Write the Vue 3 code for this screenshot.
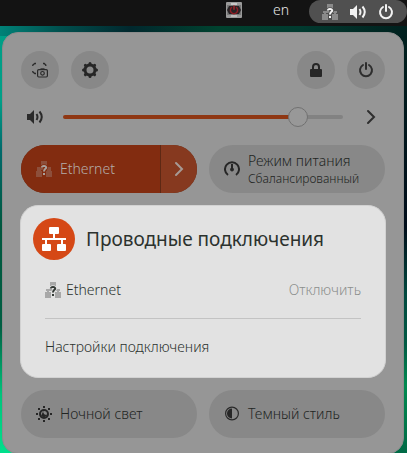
<script setup>
import { ref } from 'vue'
const volume = ref(86.5)
</script>

<template>
  <div class="desktop">
    <header class="topbar">
      <button class="tray" aria-label="Питание приложения">
        <svg width="16" height="16" viewBox="0 0 16 16">
          <rect width="16" height="16" rx="1" fill="#9a9a9a" />
          <rect x="1" y="3" width="14" height="10" fill="#777" />
          <path d="M3 4h10l2 4-2 4H3L1 8z" fill="#262224" />
          <rect x="5" y="1" width="6" height="2" fill="#c8c8c8" />
          <rect x="5" y="13" width="6" height="2" fill="#bbb" />
          <path d="M6 5.200a3.600 3.600 0 1 0 4 0" fill="none" stroke="#8e1c24" stroke-width="1.400" />
          <path d="M8 3.400v4.400" stroke="#a8242a" stroke-width="1.400" />
        </svg>
      </button>
      <button class="lang">en</button>
      <button class="status" aria-label="Системное меню">
        <svg width="16" height="16" viewBox="0 0 16 16">
          <path d="M5 0h6v5H5zM1 7h14v2H1zM0 10h6v6H0zM10 10h6v6h-6zM2 8h2v3H2zM12 8h2v3h-2z" fill="#8a8a8a" />
          <path d="M5.800 6.500a2.200 1.600 0 1 1 3.400 1.400C8.400 8.600 8 9 8 10.400M8 12v2" fill="none" stroke="#505050" stroke-width="3.500" />
          <path d="M5.800 6.500a2.200 1.600 0 1 1 3.400 1.400C8.400 8.600 8 9 8 10.400M8 12v2" fill="none" stroke="#f4f4f4" stroke-width="2" />
        </svg>
        <svg width="16" height="16" viewBox="0 0 16 16" fill="none" stroke="#f2f2f2" stroke-width="2">
          <path d="M0 5h3l4-4v14l-4-4H0z" fill="#f2f2f2" stroke="none" />
          <path d="M9.500 5q2 3 0 6M12.500 2.500q4.500 5.500 0 11" />
        </svg>
        <svg width="16" height="16" viewBox="0 0 16 16" fill="none" stroke="#f2f2f2" stroke-width="2">
          <path d="M5 3a6 6 0 1 0 6 0M8 1v6" stroke-linecap="round" />
        </svg>
      </button>
    </header>

    <main class="panel">
      <div class="row">
        <button class="round" aria-label="Снимок экрана">
          <svg width="16" height="16" viewBox="0 0 16 16" fill="none" stroke="#2a2a2a">
            <path d="M.8 4V3l2-1.500H4M11 1.500h1.200l1.600 1.500v1M.8 9v1l2 1.500H4" stroke-width="1.300" />
            <rect x="5.600" y="7.600" width="9.800" height="7.400" rx="1.200" stroke-width="1.200" />
            <path d="M8.500 7h4" stroke-width="1.400" />
            <circle cx="10.500" cy="11.300" r="1.800" stroke-width="1.200" />
          </svg>
        </button>
        <button class="round" aria-label="Настройки">
          <svg width="16" height="16" viewBox="0 0 16 16" fill="none" stroke="#262626">
            <circle cx="8" cy="8" r="5" stroke-width="3" />
            <g stroke-width="3" stroke-linecap="round"><path d="M8 1.500v1M8 13.500v1M1.500 8h1M13.500 8h1M3.400 3.400l.8.8M11.800 11.800l.8.8M3.400 12.600l.8-.8M11.800 4.200l.8-.8" /></g>
          </svg>
        </button>
        <span class="spacer"></span>
        <button class="round" aria-label="Заблокировать">
          <svg width="16" height="16" viewBox="0 0 16 16">
            <rect x="2" y="7" width="12" height="8" rx="1" fill="#262626" />
            <path d="M5 8V5a3 3 0 0 1 6 0v3" fill="none" stroke="#262626" stroke-width="2" />
          </svg>
        </button>
        <button class="round" aria-label="Выключить">
          <svg width="16" height="16" viewBox="0 0 16 16" fill="none" stroke="#2e2e2e" stroke-width="2">
            <path d="M5 3a6 6 0 1 0 6 0M8 1v6" stroke-linecap="round" />
          </svg>
        </button>
      </div>

      <div class="volume">
        <button class="plain" aria-label="Выключить звук">
          <svg width="16" height="16" viewBox="0 0 16 16" fill="none" stroke="#2a2a2a" stroke-width="2">
            <path d="M0 5h3l4-4v14l-4-4H0z" fill="#2a2a2a" stroke="none" />
            <path d="M9.500 5q2 3 0 6M12.500 2.500q4.500 5.500 0 11" />
          </svg>
        </button>
        <input v-model="volume" class="slider" type="range" min="0" max="100" step="0.5" aria-label="Громкость" :style="{ '--level': volume + '%' }" />
        <button class="plain" aria-label="Устройства вывода">
          <svg width="16" height="16" viewBox="0 0 16 16"><path d="M5 2l6 6-6 6" fill="none" stroke="#2e2e2e" stroke-width="2" stroke-linecap="round" /></svg>
        </button>
      </div>

      <div class="tiles">
        <div class="split">
          <button class="tile active">
            <svg width="16" height="16" viewBox="0 0 16 16">
              <path d="M5 0h6v5H5zM1 6h14v3H1zM0 10h6v6H0zM10 10h6v6h-6zM1 8h4v3H1zM11 8h4v3h-4z" fill="#8d4f3b" />
              <path d="M5.800 6.500a2.200 1.600 0 1 1 3.400 1.400C8.400 8.600 8 9 8 10.400M8 12v2" fill="none" stroke="#822c10" stroke-width="3.500" />
              <path d="M5.800 6.500a2.200 1.600 0 1 1 3.400 1.400C8.400 8.600 8 9 8 10.400M8 12v2" fill="none" stroke="#a9a09c" stroke-width="2" />
            </svg>
            <span>Ethernet</span>
          </button>
          <button class="more" aria-label="Список подключений">
            <svg width="16" height="16" viewBox="0 0 16 16"><path d="M5 2l6 6-6 6" fill="none" stroke="#a69a95" stroke-width="2" stroke-linecap="round" /></svg>
          </button>
        </div>
        <button class="tile">
          <svg width="16" height="16" viewBox="0 0 16 16" fill="none" stroke="#262626" stroke-width="2">
            <path d="M4 14a7 7 0 1 1 8 0" />
            <path d="M8 3v5" />
            <circle cx="8" cy="8.500" r="1.500" fill="#262626" stroke-width="1" />
          </svg>
          <span class="stack"><span>Режим питания</span><small>Сбалансированный</small></span>
        </button>
      </div>

      <section class="card">
        <div class="head">
          <span class="badge">
            <svg width="24" height="24" viewBox="0 0 24 24" fill="#fff">
              <rect x="7" y="0" width="10" height="7" rx="1" />
              <path d="M11 6h2v5h11v2h-3v5h-2v-5H5v5H3v-5H0v-2h11z" />
              <rect x="0" y="17" width="9" height="7" rx="1" />
              <rect x="15" y="17" width="9" height="7" rx="1" />
            </svg>
          </span>
          <h2>Проводные подключения</h2>
        </div>
        <div class="item">
          <svg width="16" height="16" viewBox="0 0 16 16">
            <path d="M5 0h6v4H5zM1 7h14v2H1zM0 10h6v6H0zM10 10h6v6h-6zM2 8h2v3H2zM12 8h2v3h-2z" fill="#a8a8a8" />
            <path d="M5.800 6.500a2.200 1.600 0 1 1 3.400 1.400C8.400 8.600 8 9 8 10.400M8 12v2" fill="none" stroke="#e2e2e2" stroke-width="3.500" />
            <path d="M5.800 6.500a2.200 1.600 0 1 1 3.400 1.400C8.400 8.600 8 9 8 10.400M8 12v2" fill="none" stroke="#343a36" stroke-width="2" />
          </svg>
          <span>Ethernet</span>
          <span class="spacer"></span>
          <button class="off">Отключить</button>
        </div>
        <hr />
        <a class="link" href="#settings">Настройки подключения</a>
      </section>

      <div class="tiles">
        <button class="tile">
          <svg width="16" height="16" viewBox="0 0 16 16" fill="none" stroke="#262626">
            <circle cx="8" cy="8" r="4" stroke-width="2" />
            <path d="M7.500 4.500a3 3 0 0 0 4 4A4 4 0 0 1 5 10z" fill="#262626" stroke="none" />
            <path d="M8 0v2M8 14v2M0 8h2M14 8h2M2 2.900h2M12 2.900h2M2 13.100h2M12 13.100h2" stroke-width="2" />
          </svg>
          <span>Ночной свет</span>
        </button>
        <button class="tile">
          <svg width="16" height="16" viewBox="0 0 16 16">
            <circle cx="8" cy="7.500" r="6.400" fill="none" stroke="#2a2a2a" stroke-width="1.200" />
            <path d="M8 2.500a5 5 0 0 0 0 10z" fill="#262626" />
          </svg>
          <span>Темный стиль</span>
        </button>
      </div>
    </main>
  </div>
</template>

<style>
body { margin: 0; }
</style>

<style scoped>
* { box-sizing: border-box; }
.desktop {
  height: 100vh;
  overflow: hidden;
  background:
    linear-gradient(90deg, #008278 0, #00504e 60px, #01282e 130px, #00432f 220px, #013a2f 300px, #00201e 100%) top / 100% 36px no-repeat,
    linear-gradient(#009e86 5%, #00a088 22%, #006a6c 33%, #00583f 50%, #005e42 72%, #00c47c 87%, #00e08c) left / 50% 100% no-repeat,
    linear-gradient(#00201e 10%, #000d1a 50%, #00493f 65%, #005a44 76%, #008a50 85%, #006a46);
  font-family: "Noto Sans", "Open Sans", sans-serif;
  font-size: 14px;
  font-weight: 300;
  line-height: 20px;
  color: #222523;
}
button {
  margin: 0;
  padding: 0;
  border: 0;
  background: none;
  color: inherit;
  font: inherit;
}
svg { display: block; flex: none; }
.topbar {
  display: flex;
  align-items: stretch;
  justify-content: flex-end;
  height: 26px;
  background: #131313;
  color: #e8e8e8;
}
.tray { padding: 0 16px; display: flex; align-items: center; height: 20px; }
.lang { padding: 0 20px 0 15px; height: 20px; }
.status {
  display: flex;
  align-items: center;
  gap: 12px;
  height: 23px;
  padding: 0 13px;
  border-radius: 12px;
  background: #505050;
}
.panel {
  display: flex;
  flex-direction: column;
  gap: 12px;
  margin: 6px 3px 0 2px;
  padding: 18px 18px 15px;
  border: 1px solid #8c8c8c;
  border-radius: 16px;
  background: #969696;
}
.row { display: flex; gap: 12px; }
.spacer { flex: 1; }
.round {
  display: grid;
  place-items: center;
  width: 38px;
  height: 38px;
  border-radius: 50%;
  background: #888;
}
.volume {
  display: flex;
  align-items: center;
  gap: 20px;
  height: 32px;
  padding: 0 6px;
}
.slider {
  flex: 1;
  min-width: 0;
  height: 20px;
  margin: 0;
  appearance: none;
  background: none;
}
.slider::-webkit-slider-runnable-track {
  height: 4px;
  border-radius: 2px;
  background: linear-gradient(90deg, #8f3713 var(--level), #828282 var(--level));
}
.slider::-webkit-slider-thumb {
  appearance: none;
  width: 20px;
  height: 20px;
  margin-top: -8px;
  border: 1px solid #717171;
  border-radius: 50%;
  background: #989898;
}
.tiles { display: grid; grid-template-columns: 1fr 1fr; gap: 12px; }
.tile {
  display: flex;
  align-items: center;
  gap: 8px;
  height: 48px;
  padding: 0 15px;
  border-radius: 24px;
  background: #888;
  text-align: left;
  white-space: nowrap;
}
.split { display: flex; gap: 1px; border-radius: 24px; background: #5e2814; }
.active {
  flex: 1;
  border-radius: 24px 0 0 24px;
  background: #822c10;
  color: #b4aca8;
}
.more {
  display: grid;
  place-items: center;
  width: 36px;
  border-radius: 0 24px 24px 0;
  background: #86391f;
}
.stack { display: flex; flex-direction: column; }
.stack small { font-size: 12px; line-height: 16px; }
.card {
  margin: 0 -1px;
  padding: 12px 24px 20px;
  border: 1px solid #d2d2d2;
  border-radius: 18px;
  background: #e2e2e2;
  color: #2c322e;
}
.head { display: flex; align-items: center; gap: 11px; margin-left: -12px; }
.badge {
  display: grid;
  place-items: center;
  width: 42px;
  height: 42px;
  border-radius: 50%;
  background: #d54816;
}
h2 { margin: 0; font-size: 19px; line-height: 26px; font-weight: 400; white-space: nowrap; }
.item { display: flex; align-items: center; gap: 5px; margin-top: 20px; }
.off { color: #8c8f8d; }
hr { height: 1px; margin: 18px 0; border: 0; background: #c3c3c3; }
.link { display: block; color: inherit; text-decoration: none; }
</style>
